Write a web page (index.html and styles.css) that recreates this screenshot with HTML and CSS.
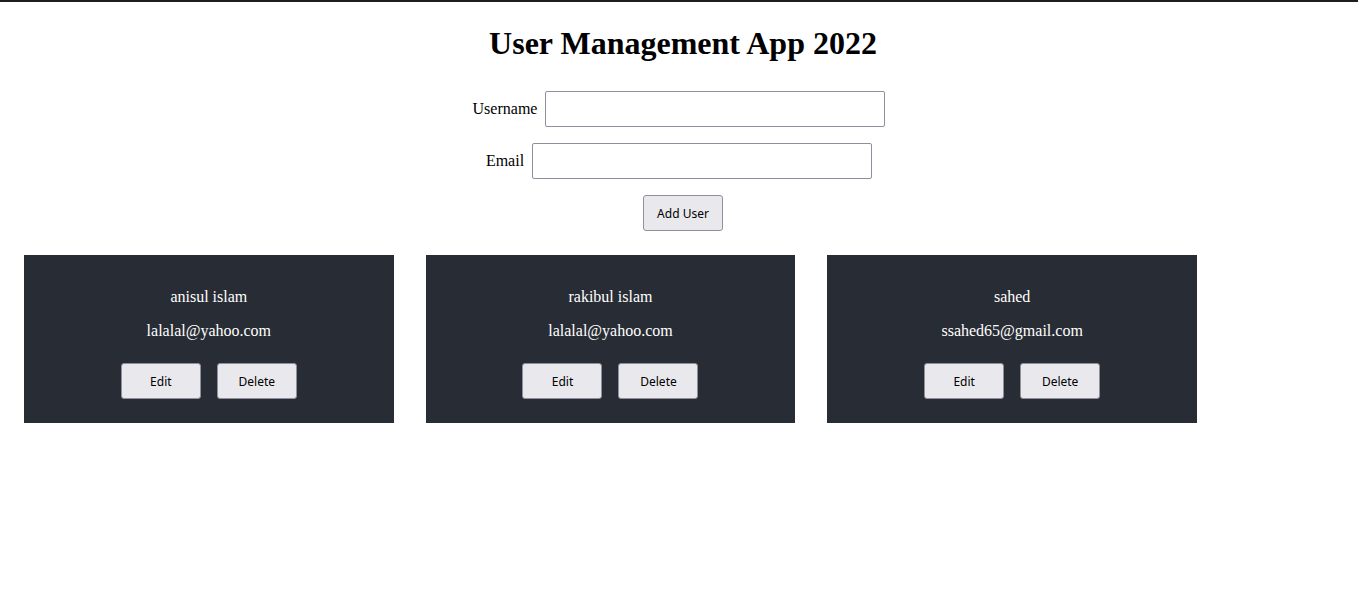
FILE: index.html
```html
<!DOCTYPE html>
<html>
<head>
<meta charset="utf-8">
<title>User Management App 2022</title>
<link rel="stylesheet" href="styles.css">
</head>
<body>
<div class="topbar"></div>
<div class="app">
  <h1 class="title">User Management App 2022</h1>
  <form class="user-form">
    <div class="field">
      <label class="field-label" for="username">Username</label>
      <input class="field-input" id="username" type="text">
    </div>
    <div class="field">
      <label class="field-label" for="email">Email</label>
      <input class="field-input" id="email" type="email">
    </div>
    <div class="form-actions">
      <button class="btn btn-add" type="button">Add User</button>
    </div>
  </form>
  <section class="users">
    <article class="card">
      <p class="card-text">anisul islam</p>
      <p class="card-text">lalalal@yahoo.com</p>
      <div class="card-actions">
        <button class="btn" type="button">Edit</button>
        <button class="btn" type="button">Delete</button>
      </div>
    </article>
    <article class="card">
      <p class="card-text">rakibul islam</p>
      <p class="card-text">lalalal@yahoo.com</p>
      <div class="card-actions">
        <button class="btn" type="button">Edit</button>
        <button class="btn" type="button">Delete</button>
      </div>
    </article>
    <article class="card">
      <p class="card-text">sahed</p>
      <p class="card-text">ssahed65@gmail.com</p>
      <div class="card-actions">
        <button class="btn" type="button">Edit</button>
        <button class="btn" type="button">Delete</button>
      </div>
    </article>
  </section>
</div>
</body>
</html>
```

FILE: styles.css
```css
html, body {
  margin: 0;
  padding: 0;
  background: #ffffff;
}

body {
  font-family: "Liberation Serif", "Times New Roman", serif;
  font-size: 16px;
  color: #000000;
}

.topbar {
  height: 2px;
  background: #1e1e22;
}

.app {
  padding: 0 8px;
}

.title {
  margin: 23px 0 0;
  padding-left: 8px;
  font-size: 32px;
  line-height: 37px;
  font-weight: bold;
  text-align: center;
}

.user-form {
  display: flex;
  flex-direction: column;
  align-items: center;
  gap: 16px;
  margin-top: 29px;
}

.field {
  display: flex;
  align-items: center;
  gap: 8px;
}

.field-label {
  font-size: 16px;
  line-height: 18px;
}

.field-input {
  box-sizing: border-box;
  width: 340px;
  height: 36px;
  border: 1px solid #8f8f9d;
  border-radius: 2px;
  background: #ffffff;
  padding: 0 6px;
  margin: 0;
  font-size: 16px;
}

.form-actions {
  display: flex;
  justify-content: center;
  padding-left: 8px;
}

.btn {
  box-sizing: border-box;
  width: 80px;
  height: 36px;
  margin: 0;
  padding: 0;
  background: #e9e9ed;
  border: 1px solid #8f8f9d;
  border-radius: 3px;
  font-family: "Noto Sans", "DejaVu Sans", sans-serif;
  font-size: 12px;
  color: #000000;
}

.users {
  display: flex;
  gap: 32px;
  margin-top: 24px;
  padding-left: 16px;
}

.card {
  box-sizing: border-box;
  width: 369.67px;
  height: 168px;
  background: #282c34;
  color: #ffffff;
  text-align: center;
  padding: 17px 16px 16px;
}

.card-text {
  margin: 16px 0;
  font-size: 16px;
  line-height: 18px;
}

.card-actions {
  display: flex;
  justify-content: center;
  gap: 16px;
  padding-top: 7px;
}
```
